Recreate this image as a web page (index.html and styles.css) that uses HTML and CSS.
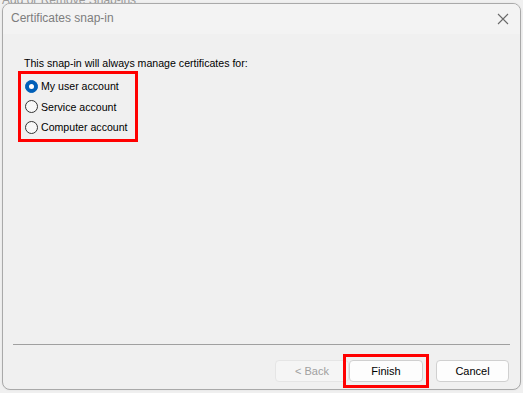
FILE: index.html
```html
<!DOCTYPE html>
<html>
<head>
<meta charset="utf-8">
<link rel="stylesheet" href="styles.css">
</head>
<body>
<div class="desktop">
  <div class="parent-title">Add or Remove Snap-ins</div>
  <div class="dialog">
    <div class="titlebar">
      <span class="title">Certificates snap-in</span>
      <svg class="close" width="12" height="12" viewBox="0 0 12 12"><path d="M1 1 L11 11 M11 1 L1 11" stroke="#6a6a6a" stroke-width="1.1" fill="none"/></svg>
    </div>
    <div class="body">
      <div class="intro">This snap-in will always manage certificates for:</div>
      <div class="highlight radios">
        <label class="radio"><span class="dot checked"></span>My user account</label>
        <label class="radio"><span class="dot"></span>Service account</label>
        <label class="radio"><span class="dot"></span>Computer account</label>
      </div>
    </div>
    <div class="separator"></div>
    <div class="footer">
      <button class="btn disabled">&lt; Back</button>
      <div class="finish-wrap"><button class="btn">Finish</button></div>
      <button class="btn cancel">Cancel</button>
    </div>
  </div>
</div>
</body>
</html>
```
FILE: styles.css
```css
html, body {
  margin: 0;
  padding: 0;
}
body {
  width: 523px;
  height: 393px;
  overflow: hidden;
  background: #f0f0f0;
  font-family: "Liberation Sans", Arial, sans-serif;
}
.desktop {
  position: relative;
  width: 523px;
  height: 393px;
  overflow: hidden;
}
.parent-title {
  position: absolute;
  left: 2px;
  top: -7px;
  font-family: "Liberation Sans", sans-serif;
  font-size: 12px;
  line-height: 14px;
  color: #9a9a9a;
}
.dialog {
  position: absolute;
  left: 2px;
  top: 3px;
  width: 519px;
  height: 387px;
  box-sizing: border-box;
  border: 1px solid #a9a9a9;
  border-radius: 8px;
  background: #f0f0f0;
  display: flex;
  flex-direction: column;
  overflow: hidden;
  box-shadow: 0 0 2px rgba(0,0,0,0.08);
}
.titlebar {
  height: 30px;
  flex: none;
  background: #f3f3f3;
  display: flex;
  align-items: center;
  justify-content: space-between;
  padding: 0 11px 0 8px;
}
.title {
  font-family: "Liberation Sans", sans-serif;
  font-size: 12px;
  color: #7d7d7d;
  margin-top: -2px;
}
.close {
  margin-top: -1px;
}
.body {
  flex: 1;
  padding: 22px 0 0 15px;
}
.intro {
  font-size: 10.6px;
  line-height: 14px;
  color: #000;
  padding-left: 6px;
  margin-bottom: 1px;
}
.highlight {
  border: 3px solid #ff0000;
  box-sizing: border-box;
}
.radios {
  width: 120px;
  height: 71px;
  padding: 2px 0 0 4px;
  display: flex;
  flex-direction: column;
}
.radio {
  height: 20.5px;
  display: flex;
  align-items: center;
  font-size: 10.6px;
  color: #000;
}
.dot {
  width: 13px;
  height: 13px;
  box-sizing: border-box;
  border: 1px solid #333;
  border-radius: 50%;
  margin-right: 3px;
  background: #f7f7f7;
  position: relative;
}
.dot.checked {
  background: #005fb8;
  border-color: #005fb8;
}
.dot.checked::after {
  content: "";
  position: absolute;
  left: 3px;
  top: 3px;
  width: 5px;
  height: 5px;
  border-radius: 50%;
  background: #fff;
}
.separator {
  flex: none;
  height: 1px;
  background: #a0a0a0;
  margin: 0 10px;
}
.footer {
  flex: none;
  display: flex;
  justify-content: flex-end;
  align-items: center;
  padding: 15px 11px 7px 0;
  height: 22px;
}
.btn {
  width: 74px;
  height: 22px;
  box-sizing: border-box;
  border: 1px solid #d0d0d0;
  border-radius: 4px;
  background: #fdfdfd;
  font-family: "Liberation Sans", Arial, sans-serif;
  font-size: 11px;
  color: #000;
  padding: 0;
}
.btn.disabled {
  color: #a0a0a0;
  background: #f5f5f5;
  border-color: #e5e5e5;
}
.finish-wrap {
  border: 3px solid #ff0000;
  padding: 3px 3px;
  margin: 0 7px 0 -6px;
  display: flex;
}
.cancel {
  width: 73px;
}
```
